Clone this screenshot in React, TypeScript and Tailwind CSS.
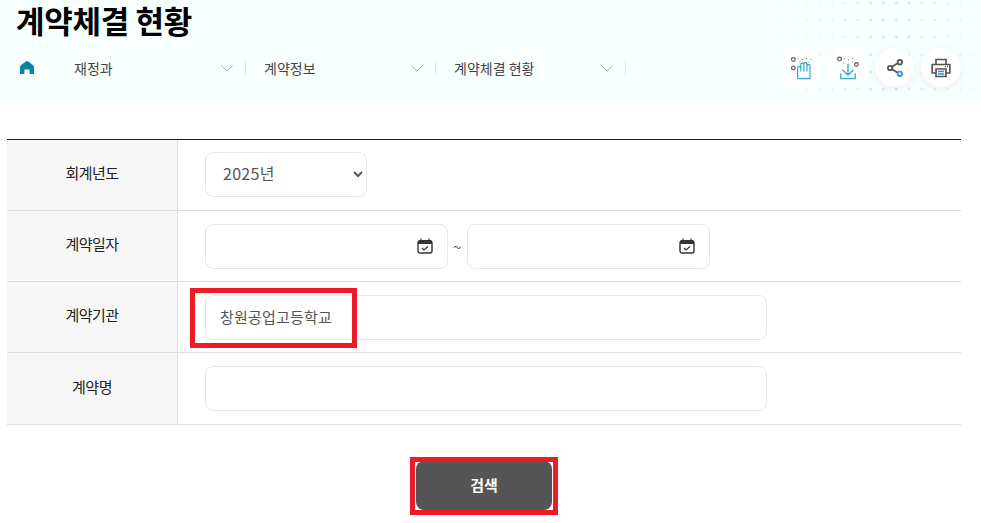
const fontStack = { fontFamily: '"Noto Sans CJK KR", "Noto Sans", sans-serif' };

const dotXs = Array.from({ length: 17 }, (_, i) => 5 + i * 12.8);
const dotYs = [3, 20, 37, 55, 72, 89];

const DotPattern = () => (
  <svg className="absolute right-0 top-0" width="205" height="103" viewBox="0 0 205 103" aria-hidden="true">
    {dotYs.map((y) =>
      dotXs.map((x) => {
        const fade = 1 - Math.abs(x - 115) / 120;
        return <circle key={`${x}-${y}`} cx={x} cy={y} r={0.6 + fade * 1} fill="#c4eefb" opacity={0.25 + fade * 0.75} />;
      })
    )}
  </svg>
);

const HomeIcon = () => (
  <svg width="14" height="13" viewBox="0 0 14 13">
    <path d="M5.8.5a2 2 0 0 1 2.4 0L13 4.2a2 2 0 0 1 1 1.6V13H9.6V8.6H4.4V13H0V5.8a2 2 0 0 1 1-1.6Z" fill="#0a83a8" />
  </svg>
);

const Chevron = () => (
  <svg width="14" height="8" viewBox="0 0 14 8" fill="none" stroke="#a8adb2" strokeWidth="1">
    <path d="M1 1.2 7 7l6-5.8" />
  </svg>
);

const Crumb = ({ label }: { label: string }) => (
  <div className="flex h-[14px] w-[190px] items-center border-r border-[#dde2e4] pr-[11px]">
    <span className="flex-1 pl-[18px] text-[14px] leading-none text-[#444]">{label}</span>
    <Chevron />
  </div>
);

const HandIcon = () => (
  <svg width="22" height="24" viewBox="0 0 26 28" fill="none">
    <circle cx="4" cy="4" r="2.2" stroke="#666" strokeWidth="1.5" />
    <circle cx="4" cy="14" r="2.2" stroke="#666" strokeWidth="1.5" />
    <path d="M9 3h1.2M14 4h1.2M19 3h1.2M24 4h1.2M11 7h1M22 7h1" stroke="#888" strokeWidth="1.2" />
    <path d="M9 26.5V14a1.9 1.9 0 0 1 3.8 0V9.5a1.9 1.9 0 0 1 3.6 0V9a1.9 1.9 0 0 1 3.6 0v2a1.9 1.9 0 0 1 3.6 0v15.5ZM12.8 13v5M16.4 9v9M20 10v8" stroke="#2aa9d2" strokeWidth="1.4" />
  </svg>
);

const DownIcon = () => (
  <svg width="22" height="24" viewBox="0 0 26 28" fill="none">
    <circle cx="3" cy="3.5" r="2.2" stroke="#666" strokeWidth="1.5" />
    <circle cx="23" cy="10" r="2.2" stroke="#666" strokeWidth="1.5" />
    <path d="M8 3h1.2M13 4h1.2M18 3h1.2M7 8h1.2M18 7h1.2" stroke="#888" strokeWidth="1.2" />
    <path d="M13 9v13.5M6.5 16.5l6.5 6 6.5-6" stroke="#2aa9d2" strokeWidth="1.6" />
    <path d="M4.5 20.5v6h17v-6" stroke="#2aa9d2" strokeWidth="1.6" />
  </svg>
);

const ShareIcon = () => (
  <svg width="16" height="18" viewBox="0 0 18 20" fill="none" strokeWidth="2">
    <path d="M5 9 12.5 4.5M5 11l7.5 4.5" stroke="#555" />
    <circle cx="3.5" cy="10" r="2.5" stroke="#555" />
    <circle cx="14.5" cy="3.5" r="2.5" stroke="#555" />
    <circle cx="14.5" cy="16.5" r="2.5" stroke="#1d9cc6" />
  </svg>
);

const PrintIcon = () => (
  <svg width="20" height="20" viewBox="0 0 20 20" fill="none" stroke="#555" strokeWidth="1.7">
    <path d="M5 6V1.5h10V6" />
    <path d="M5 15H1.2V6.5h17.6V15H15" />
    <path d="M5 11h10v7.5H5Z" />
    <path d="M7 13.5h6M7 16h6" stroke="#1d9cc6" />
    <path d="M14 8.5h1M16 8.5h1" />
  </svg>
);

const CalendarIcon = () => (
  <svg width="16" height="16" viewBox="0 0 16 16" fill="none">
    <path d="M1 4a2 2 0 0 1 2-2h10a2 2 0 0 1 2 2v2H1Z" fill="#333" />
    <path d="M4 .5v2M12 .5v2" stroke="#333" strokeWidth="1.2" />
    <rect x="1" y="3" width="14" height="12" rx="2" stroke="#333" strokeWidth="1.4" />
    <path d="m5 10 2 2 4-3.5" stroke="#333" strokeWidth="1.2" />
  </svg>
);

const RoundButton = ({ children, className }: { children: React.ReactNode; className: string }) => (
  <button className={`flex h-[39px] items-center justify-center rounded-full bg-white ${className}`}>
    {children}
  </button>
);

const Row = ({ label, children, last }: { label: string; children: React.ReactNode; last?: boolean }) => (
  <div className={`flex border-b border-[#dedede] ${last ? "h-[72px]" : "h-[71px]"}`}>
    <div className="flex w-[171px] items-center justify-center border-r border-[#dedede] bg-[#f7f7f7] pb-[3px] text-[15px] tracking-[-0.5px] text-[#222]">
      {label}
    </div>
    <div className="flex flex-1 items-center gap-[5px] pl-[27px]">{children}</div>
  </div>
);

const inputClass = "h-[45px] rounded-[8px] border border-[#e7e7e7] bg-white px-[14px] text-[15px] text-[#555] outline-none";

const DateField = () => (
  <div className={`${inputClass} flex w-[243px] items-center justify-end`}>
    <input className="min-w-0 flex-1 outline-none" aria-label="date" />
    <CalendarIcon />
  </div>
);

export default function App() {
  return (
    <div className="relative h-[523px] w-[981px] overflow-hidden bg-white" style={fontStack}>
      <header className="relative h-[103px] bg-[#f8ffff]">
        <DotPattern />
        <h1 className="relative pl-4 text-[31px] font-bold leading-[40px] tracking-[-0.3px] text-black">계약체결 현황</h1>
        <div className="relative mt-[8px] flex items-center pl-5 pr-5">
          <HomeIcon />
          <div className="ml-[22px] flex">
            <Crumb label="재정과" />
            <Crumb label="계약정보" />
            <Crumb label="계약체결 현황" />
          </div>
          <div className="ml-auto flex items-center gap-[7px]">
            <RoundButton className="w-10"><HandIcon /></RoundButton>
            <RoundButton className="w-10"><DownIcon /></RoundButton>
            <RoundButton className="w-[39px] shadow-[0_2px_8px_rgba(0,0,0,0.07)]"><ShareIcon /></RoundButton>
            <RoundButton className="w-10 shadow-[0_2px_8px_rgba(0,0,0,0.07)]"><PrintIcon /></RoundButton>
          </div>
        </div>
      </header>

      <main className="ml-[7px] mr-5 mt-9 border-t border-[#222]">
        <Row label="회계년도">
          <select defaultValue="2025" className={`${inputClass} -mt-[2px] w-[162px] pb-[2px] pl-[13px] pr-3 text-[16px] tracking-[0.3px]`}>
            <option value="2025">2025년</option>
          </select>
        </Row>
        <Row label="계약일자">
          <DateField />
          <span className="w-[9px] text-[15px] leading-none text-[#555]">~</span>
          <DateField />
        </Row>
        <Row label="계약기관">
          <input defaultValue="창원공업고등학교" className={`${inputClass} w-[562px] pb-[2px] tracking-[0.2px]`} />
        </Row>
        <Row label="계약명" last>
          <input className={`${inputClass} w-[562px]`} aria-label="계약명" />
        </Row>
      </main>

      <div className="ml-[7px] mr-5 mt-9 flex justify-center">
        <button className="h-[49px] w-[136px] rounded-[8px] bg-[#555] text-[15px] font-bold text-white">검색</button>
      </div>

      {/* annotation boxes drawn over the form */}
      <div className="pointer-events-none absolute left-[190px] top-[288px] h-[60px] w-[167px] border-[5px] border-[#ed1c24]" />
      <div className="pointer-events-none absolute left-[410px] top-[457px] h-[58px] w-[148px] border-[5px] border-[#ed1c24]" />
    </div>
  );
}
